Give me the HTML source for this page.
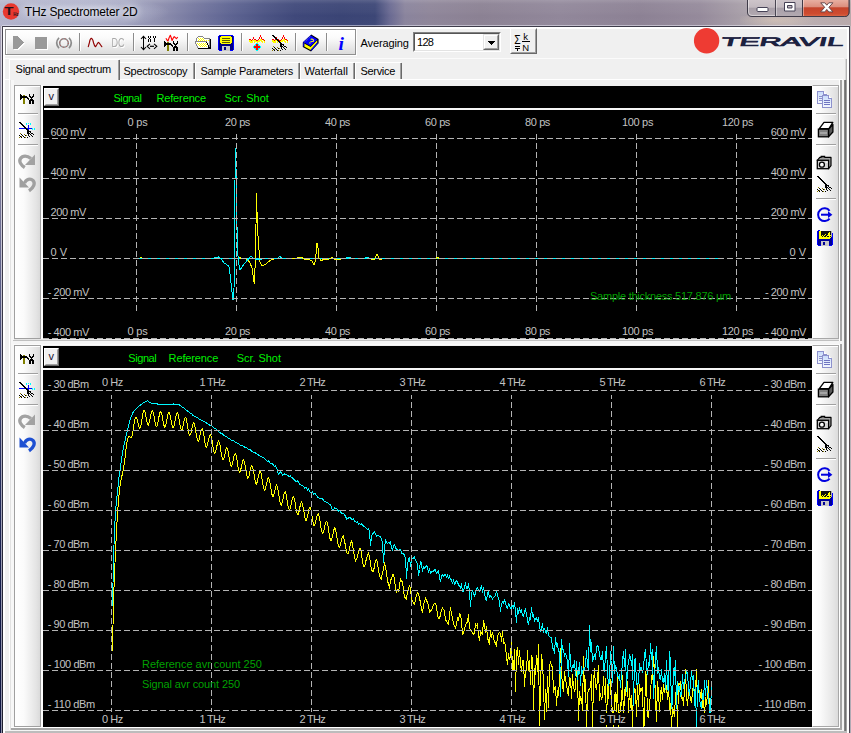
<!DOCTYPE html>
<html><head><meta charset="utf-8"><title>THz Spectrometer 2D</title>
<style>
html,body{margin:0;padding:0;}
body{width:851px;height:733px;overflow:hidden;position:relative;background:#f0f0f0;font-family:"Liberation Sans", sans-serif;font-size:11px;}
.a{position:absolute;}
.t{position:absolute;white-space:nowrap;line-height:13px;height:13px;}
svg{position:absolute;left:0;top:0;overflow:visible;}
</style></head><body>
<div class="a" style="left:0px;top:0px;width:851px;height:26px;background:linear-gradient(180deg,rgba(255,255,255,.16) 0,rgba(255,255,255,.05) 4px,rgba(255,255,255,.03) 45%,rgba(255,255,255,0) 60%,rgba(255,255,255,.02) 100%),radial-gradient(ellipse 90px 16px at 80px 12px,rgba(205,208,228,.75),rgba(205,208,228,0) 100%),linear-gradient(90deg,#b4b4cc 0,#a9abc5 40px,#a0a2be 125px,#8d8eae 160px,#74779f 195px,#5e6492 230px,#4c5484 265px,#3f487a 295px,#3a4475 340px,#3c4676 375px,#6a6a92 390px,#8a849d 405px,#8e8599 430px,#8b8193 480px,#91879a 560px,#8c8194 640px,#958a9b 700px,#a9a0a9 745px,#baafb3 790px,#b8a9ab 851px);"></div>
<div class="a" style="left:740px;top:16px;width:111px;height:10px;background:radial-gradient(ellipse 40px 9px at 35px 4px,rgba(225,205,185,.55),rgba(225,205,185,0) 100%);"></div>
<div class="a" style="left:2px;top:25px;width:848px;height:1px;background:rgba(235,235,245,.55);"></div>
<div class="a" style="left:2px;top:26px;width:848px;height:1px;background:#3e3c4a;"></div>
<div class="a" style="left:0px;top:26px;width:1px;height:707px;background:linear-gradient(180deg,#a9a3b8 0,#8f8da8 100px,#5d6088 250px,#2f3766 400px,#141c4a 560px,#0f1640 707px);"></div>
<div class="a" style="left:1px;top:26px;width:1px;height:707px;background:linear-gradient(180deg,#dcdae4 0,#d6d3de 120px,#b4b4c8 350px,#9496ae 600px,#9092aa 707px);"></div>
<div class="a" style="left:2px;top:26px;width:1px;height:707px;background:linear-gradient(180deg,#45424f 0,#45424f 150px,#2a2a3c 450px,#20202e 707px);"></div>
<div class="a" style="left:849px;top:26px;width:1px;height:707px;background:linear-gradient(180deg,#47434e 0,#574a4c 300px,#4a4450 707px);"></div>
<div class="a" style="left:850px;top:26px;width:1px;height:707px;background:linear-gradient(180deg,#c4b9bc 0,#bfb6ba 300px,#b0aab4 707px);"></div>
<div class="a" style="left:3px;top:27px;width:846px;height:706px;background:#f0f0f0;"></div>
<div class="a" style="left:3px;top:27px;width:846px;height:2px;background:#fff;"></div>
<div class="a" style="left:3px;top:27px;width:2px;height:706px;background:#fff;"></div>
<div class="a" style="left:847px;top:27px;width:2px;height:706px;background:#fff;"></div>
<svg width="24" height="24" viewBox="0 0 24 24" style="left:0;top:0">
<circle cx="11" cy="11.5" r="8.2" fill="#e8382f"/>
<text x="4.600" y="15.200" font-family="Liberation Sans, sans-serif" font-size="10" font-weight="bold" fill="#23141c" textLength="9" lengthAdjust="spacingAndGlyphs">T</text>
<text x="13.2" y="15.8" font-family="Liberation Sans, sans-serif" font-size="4.6" font-weight="bold" fill="#23141c" textLength="5.2" lengthAdjust="spacingAndGlyphs">Hz</text>
</svg>
<div class="t" style="left:24.80px;top:5px;color:#000;font-size:12px;letter-spacing:-0.181px;line-height:15px;height:15px;text-shadow:0 0 6px rgba(255,255,255,.9),0 0 10px rgba(255,255,255,.7);">THz Spectrometer 2D</div>
<svg width="110" height="20" viewBox="0 0 110 20" style="left:741px;top:0">
<defs>
<linearGradient id="cbg" x1="0" y1="0" x2="0" y2="1"><stop offset="0" stop-color="#cfc6cb"/><stop offset=".48" stop-color="#c2b9bf"/><stop offset=".5" stop-color="#a89fa8"/><stop offset="1" stop-color="#b3aab1"/></linearGradient>
<linearGradient id="cbr" x1="0" y1="0" x2="0" y2="1"><stop offset="0" stop-color="#e9b3a6"/><stop offset=".45" stop-color="#dc8f7e"/><stop offset=".5" stop-color="#c4442c"/><stop offset=".85" stop-color="#cf4c30"/><stop offset="1" stop-color="#d9694a"/></linearGradient>
</defs>
<path d="M6.5 -1V12q0 4.5 4.5 4.5H103.5q4.5 0 4.5-4.5V-1z" fill="url(#cbg)" stroke="#3f3b48" stroke-width="1"/>
<path d="M61.5 -1V16.5H103.5q4.5 0 4.5-4.5V-1z" fill="url(#cbr)" stroke="#3f3b48" stroke-width="1"/>
<path d="M7.5 0V12q0 3.5 3.5 3.5H34" fill="none" stroke="rgba(255,255,255,.45)" stroke-width="1"/>
<path d="M35.5 0V16M62.5 0V16" fill="none" stroke="rgba(255,255,255,.4)" stroke-width="1"/>
<path d="M34.5 0V16" stroke="#4a4652" stroke-width="1"/>
<rect x="16" y="7.5" width="11" height="4" rx="1" fill="#fff" stroke="#464256" stroke-width="1"/>
<path d="M43.5 2.5h10.5v8.5h-10.5z M46.5 5.5h4.5v2.5h-4.5z" fill="#fff" fill-rule="evenodd" stroke="#464256" stroke-width="1"/>
<path d="M79.700 2.800h4.100l2 2.400 2-2.400h4.100l-4 4.500 4.100 4.600h-4.200l-2-2.500-2 2.500h-4.200l4.100-4.600z" fill="#fff" stroke="#5a3c40" stroke-width=".9"/>
</svg>
<div class="a" style="left:5px;top:29px;width:351px;height:26px;box-sizing:border-box;border:1px solid #8f8f8f;background:linear-gradient(180deg,#ffffff 0,#fafafa 35%,#e9e9e9 70%,#dcdcdc 100%);"></div>
<div class="a" style="left:6px;top:30px;width:349px;height:1px;background:#fff;"></div>
<div class="a" style="left:6px;top:30px;width:1px;height:24px;background:#fff;"></div>
<div class="a" style="left:5px;top:55px;width:351px;height:1px;background:#fff;"></div>
<div class="a" style="left:356px;top:29px;width:1px;height:27px;background:#fff;"></div>
<div class="a" style="left:79px;top:33px;width:1px;height:18px;background:#8c8c8c;"></div><div class="a" style="left:80px;top:33px;width:1px;height:18px;background:#fff;"></div>
<div class="a" style="left:133px;top:33px;width:1px;height:18px;background:#8c8c8c;"></div><div class="a" style="left:134px;top:33px;width:1px;height:18px;background:#fff;"></div>
<div class="a" style="left:187px;top:33px;width:1px;height:18px;background:#8c8c8c;"></div><div class="a" style="left:188px;top:33px;width:1px;height:18px;background:#fff;"></div>
<div class="a" style="left:241px;top:33px;width:1px;height:18px;background:#8c8c8c;"></div><div class="a" style="left:242px;top:33px;width:1px;height:18px;background:#fff;"></div>
<div class="a" style="left:295px;top:33px;width:1px;height:18px;background:#8c8c8c;"></div><div class="a" style="left:296px;top:33px;width:1px;height:18px;background:#fff;"></div>
<div class="a" style="left:326px;top:33px;width:1px;height:18px;background:#8c8c8c;"></div><div class="a" style="left:327px;top:33px;width:1px;height:18px;background:#fff;"></div>
<svg width="360" height="60" viewBox="0 0 360 60" shape-rendering="crispEdges">
<!-- play -->
<path d="M14 37h4l7 6.5-7 6.5h-4z" fill="#fff"/>
<path d="M13 36h4l6.5 6.5-6.5 6.5h-4z" fill="#999"/>
<!-- stop -->
<rect x="36" y="38" width="12" height="12" fill="#fff"/>
<rect x="35" y="37" width="12" height="12" fill="#999"/>
<!-- (O) -->
<g shape-rendering="auto" fill="none" stroke="#8c8c8c">
<circle cx="64" cy="43" r="4.3" stroke-width="1.6"/>
<path d="M59 37.8q-4.6 5.2 0 10.4M69 37.8q4.600 5.2 0 10.4" stroke-width="1.7"/>
<circle cx="64" cy="43" r="4.3" stroke="#d04040" stroke-width=".7" stroke-dasharray="1 2.4"/>
</g>
<!-- red wave -->
<path d="M88.300 46.700L89.300 43L90 40L90.700 38.700L91.300 38.300L92 38.800L92.800 40L93.600 43L94.600 45.800L95.600 46.700L96.600 45L97.600 43.200L98.500 42.400L99.500 43.400L100.600 45L101.800 46.700" shape-rendering="auto" fill="none" stroke="#900000" stroke-width="1.150" stroke-linejoin="round" stroke-linecap="round"/>
<text x="111.600" y="46.800" shape-rendering="auto" font-family="Liberation Sans, sans-serif" font-size="12" fill="#a8a8a8" textLength="13" lengthAdjust="spacingAndGlyphs" style="filter:drop-shadow(1px 1px 0 #fff)">DC</text>
<!-- XY arrows -->
<g fill="none" stroke="#000" stroke-width="1" shape-rendering="auto">
<path d="M143.500 36.500v13"/>
<path d="M141 39l2.500-2.700 2.500 2.700M141 47l2.500 2.700 2.500-2.700" stroke-width="1.100"/>
<path d="M150 46.300h4" stroke-width="1.200"/>
<path d="M150 43.800l-2.800 2.500 2.800 2.500M154 43.800l2.800 2.500-2.800 2.500" stroke-width="1.100"/>
</g>
<g fill="none" stroke="#000" stroke-width="1">
<path d="M148.500 36v2M150.500 36v2M149.500 38v1M148.500 39v3M150.500 39v3"/>
<path d="M153.500 36v2M155.500 36v2M154.500 38v4"/>
</g>
<!-- hammer + wrench + red wave -->
<path d="M165.900 38.200L167 40L168 41L169 38L170.300 35.200L171 37L172.100 40.500L173 38.500L174.200 36.600L175.200 37.500L176.300 38.700L177.800 37.200" shape-rendering="auto" fill="none" stroke="#ff0000" stroke-width="1.100" stroke-linejoin="round"/>
<rect x="167" y="42" width="2" height="9" fill="#808000"/>
<path d="M164 41h1v1h1v1h5v1h1v1h1v2h-1v-1h-1v-1h-5v1h-1v1h-1z" fill="#000"/>
<path d="M173 41h1v2h1v1h1v-1h1v-2h1v3h-1v1h-1v1h1v1h1v4h-2v-3h-1v3h-2v-4h1v-1h1v-1h-1v-1h-1z" fill="#000"/>
<!-- open folder -->
<defs><pattern id="dth" width="2" height="2" patternUnits="userSpaceOnUse"><rect width="2" height="2" fill="#fff"/><rect x="0" y="0" width="1" height="1" fill="#ffff00"/><rect x="1" y="1" width="1" height="1" fill="#ffff00"/></pattern></defs>
<g>
<path d="M197 37h6v1h1v1h6v3h-13z" fill="#fff"/>
<path d="M198 38h5v1h2v1h4v1h-11z" fill="url(#dth)"/>
<path d="M196 42h11l3 6h-11z" fill="#fff"/>
<path d="M197 43h9l2 4h-9z" fill="url(#dth)"/>
<path d="M198 36.500h5M197 37.500h1M203 37.500h1M204 38.500h6M196.500 38v3M195 41.500h12M195.500 42v2M196.500 44v2M197.500 46v2" fill="none" stroke="#858585" stroke-width="1"/>
<path d="M209 39h1v8h-1z" fill="#858585"/><path d="M210 39h1v10h-1zM198 48h12v1h-12zM206 42h1v1h-1zM207 43h1v2h-1zM208 45h1v3h-1zM209 47h1v1h-1z" fill="#000"/>
</g>
<!-- floppy -->
<g>
<path d="M219 35h14v1h1v14h-1v1h-14v-1h-1v-14h1z" fill="#0000ff"/>
<rect x="219" y="36" width="14" height="14" fill="#000080"/>
<path d="M221 36h10v1h1v6h-1v1h-10v-1h-1v-6h1z" fill="#ffff00"/>
<path d="M222 38.500h8M222 40.500h8M222 42.500h8" stroke="#5a5a00" stroke-width="1"/>
<rect x="222" y="46" width="8" height="5" fill="#c8c8c8"/>
<rect x="224" y="47" width="2" height="3" fill="#000080"/>
</g>
<!-- wave + plus -->
<path d="M249 40h2v2h-2zM250 42h3v1h-3zM251 41h1v1h-1zM252 40h1v2h-1zM253 40h1v1h-1zM254 40h2v2h-2zM254 42h1v1h-1zM256 41h2v1h-2zM257 42h1v1h-1zM258 40h2v2h-2zM260 39h2v2h-2zM261 41h1v1h-1zM262 41h1v2h-1zM263 40h1v1h-1zM264 41h1v2h-1z" fill="#ffff00"/><path d="M249 39h2v1h-2zM251 40h1v1h-1zM252 39h1v1h-1zM253 37h1v2h-1zM254 39h2v1h-2zM256 40h2v1h-2zM258 39h1v1h-1zM259 37h1v2h-1zM260 35h1v2h-1zM261 37h1v2h-1zM262 39h2v1h-2zM264 40h1v1h-1z" fill="#ff0000"/>
<path d="M256 43h2v1h-2zM255 44h4v1h-4zM254 45h6v1h-6zM253 46h8v2h-8zM254 48h6v1h-6zM255 49h4v1h-4zM256 50h2v1h-2z" fill="#00ffff"/><path d="M256 44h2v6h-2zM254 46h6v2h-6z" fill="#ff0000"/>
<!-- wave + rake -->
<path d="M272 40h2v2h-2zM273 42h3v1h-3zM274 41h1v1h-1zM275 40h1v2h-1zM276 40h1v1h-1zM277 40h2v2h-2zM277 42h1v1h-1zM279 41h2v1h-2zM280 42h1v1h-1zM281 40h2v2h-2zM283 39h2v2h-2zM284 41h1v1h-1zM285 41h1v2h-1zM286 40h1v1h-1zM287 41h1v2h-1z" fill="#ffff00"/><path d="M272 39h2v1h-2zM274 40h1v1h-1zM275 39h1v1h-1zM276 37h1v2h-1zM277 39h2v1h-2zM279 40h2v1h-2zM281 39h1v1h-1zM282 37h1v2h-1zM283 35h1v2h-1zM284 37h1v2h-1zM285 39h2v1h-2zM287 40h1v1h-1z" fill="#ff0000"/>
<path d="M272 35h2v1h-2zM273 36h2v1h-2zM274 37h2v1h-2zM275 38h2v1h-2zM276 39h2v1h-2zM277 40h2v1h-2zM278 41h2v1h-2zM279 42h2v1h-2zM280 43h2v1h-2zM281 44h2v1h-2zM280 44h3v1h-3zM280 45h2v2h-2zM281 47h1v2h-1zM282 46h1v1h-1zM282 49h1v1h-1zM283 45h1v1h-1zM283 47h1v1h-1zM284 46h1v1h-1zM284 48h1v1h-1zM285 46h1v1h-1zM285 49h1v1h-1zM286 47h1v1h-1zM283 44h1v1h-1z" fill="#000"/><path d="M272 48h1v1h-1zM273 49h1v1h-1zM274 50h1v1h-1zM274 47h1v1h-1zM275 48h1v1h-1zM276 49h1v1h-1zM277 50h1v1h-1zM278 48h1v1h-1zM280 50h1v1h-1z" fill="#000"/><path d="M273 46h1v1h-1zM277 47h1v1h-1zM279 48h1v1h-1zM274 49h1v1h-1zM272 50h1v1h-1zM278 50h1v1h-1z" fill="#908000"/>
<!-- help book -->
<g shape-rendering="auto">
<path d="M310.600 35.200L311.200 34.400L318.600 39V43.300L311 51.400L302.800 47V42.400L303.200 42.100Z" fill="#000"/>
<path d="M304.200 43.400L310.600 47L317.200 40.300V42.600L310.600 50L304.200 46.500Z" fill="#ffff00"/>
<path d="M310.900 50.400L317.900 42.700" stroke="#0000ff" stroke-width="1.100"/>
<path d="M303.200 42.200V46.300L304.300 46.800V42.800Z" fill="#0000ff"/>
<path d="M310.600 35.200L317.400 39.400L310.600 46.200L303.200 42.100Z" fill="#0000ff"/>
<path d="M304.600 42L310.600 36.200" stroke="#a0a070" stroke-width=".9" stroke-dasharray="1 1"/>
<text x="0" y="0" font-family="Liberation Sans, sans-serif" font-weight="bold" font-size="8" fill="#ffff00" transform="translate(307.600,42.100) rotate(38)">?</text>
</g>
<!-- info i -->
<text x="338.600" y="49.600" shape-rendering="auto" font-family="Liberation Serif, serif" font-style="italic" font-weight="bold" font-size="19.500" fill="#0000ff">i</text>
</svg>
<div class="t" style="left:360.60px;top:37px;color:#000;font-size:11px;letter-spacing:-0.127px;">Averaging</div>
<div class="a" style="left:413px;top:32px;width:88px;height:20px;box-sizing:border-box;background:#fff;border:1px solid;border-color:#828282 #fff #fff #828282;"></div>
<div class="a" style="left:414px;top:33px;width:86px;height:18px;box-sizing:border-box;border:1px solid;border-color:#555 #e3e3e3 #e3e3e3 #555;"></div>
<div class="t" style="left:417.00px;top:36px;color:#000;font-size:11px;letter-spacing:-0.720px;">128</div>
<div class="a" style="left:483px;top:34px;width:16px;height:16px;box-sizing:border-box;background:#f0f0f0;border:1px solid;border-color:#e3e3e3 #696969 #696969 #e3e3e3;"></div>
<div class="a" style="left:484px;top:35px;width:14px;height:14px;box-sizing:border-box;border:1px solid;border-color:#fff #a0a0a0 #a0a0a0 #fff;"></div>
<svg width="20" height="20" viewBox="0 0 20 20" style="left:483px;top:34px" shape-rendering="crispEdges"><path d="M5 7h7v1h-1v1h-1v1h-1v1h-1v-1h-1v-1h-1v-1h-1z" fill="#000"/></svg>
<div class="a" style="left:510px;top:28px;width:27px;height:26px;box-sizing:border-box;background:#f0f0f0;border:1px solid;border-color:#fff #696969 #696969 #fff;"></div>
<div class="a" style="left:511px;top:29px;width:25px;height:24px;box-sizing:border-box;border:1px solid;border-color:#f0f0f0 #a0a0a0 #a0a0a0 #f0f0f0;"></div>
<svg width="30" height="30" viewBox="0 0 30 30" style="left:510px;top:28px">
<text x="4.300" y="16" font-family="Liberation Sans, sans-serif" font-size="13" fill="#000" textLength="6.400" lengthAdjust="spacingAndGlyphs">Σ</text>
<g shape-rendering="crispEdges" fill="none" stroke="#000" stroke-width="1">
<path d="M5 18.500h5M5 20.500h5M7.500 21v2"/>
<path d="M12 13.500h8"/>
</g>
<text x="13.200" y="12" font-family="Liberation Sans, sans-serif" font-size="9.500" fill="#000">k</text>
<text x="12.300" y="22.500" font-family="Liberation Sans, sans-serif" font-size="9.500" fill="#000">N</text>
</svg>
<svg width="160" height="30" viewBox="0 0 160 30" style="left:690px;top:27px">
<circle cx="16.600" cy="13.800" r="12.700" fill="#ee3b33"/>
<g transform="translate(30.500,18.700) skewX(-14)"><text x="0" y="0" font-family="Liberation Sans, sans-serif" font-size="12.400" fill="#1b2140" stroke="#1b2140" stroke-width=".75" textLength="122.500" lengthAdjust="spacingAndGlyphs">TERAVIL</text></g>
</svg>
<div class="a" style="left:5px;top:58px;width:839px;height:1px;background:#fbfbfb;"></div>
<div class="a" style="left:5px;top:79px;width:838px;height:1px;background:#fff;"></div>
<div class="a" style="left:9px;top:59px;width:1px;height:674px;background:#fff;"></div>
<div class="a" style="left:10px;top:80px;width:1px;height:650px;background:#e2e2e2;"></div>
<div class="a" style="left:11px;top:80px;width:3px;height:653px;background:#f7f7f7;"></div>
<div class="a" style="left:119px;top:62px;width:76px;height:17px;background:#f0f0f0;"></div><div class="a" style="left:119px;top:62px;width:75px;height:1px;background:#fff;"></div><div class="a" style="left:119px;top:62px;width:1px;height:17px;background:#fff;"></div><div class="a" style="left:193px;top:63px;width:1px;height:16px;background:#a0a0a0;"></div><div class="a" style="left:194px;top:63px;width:1px;height:16px;background:#696969;"></div><div class="t" style="left:123.50px;top:65px;color:#000;font-size:11px;letter-spacing:-0.238px;">Spectroscopy</div>
<div class="a" style="left:195px;top:62px;width:105px;height:17px;background:#f0f0f0;"></div><div class="a" style="left:195px;top:62px;width:104px;height:1px;background:#fff;"></div><div class="a" style="left:195px;top:62px;width:1px;height:17px;background:#fff;"></div><div class="a" style="left:298px;top:63px;width:1px;height:16px;background:#a0a0a0;"></div><div class="a" style="left:299px;top:63px;width:1px;height:16px;background:#696969;"></div><div class="t" style="left:200.50px;top:65px;color:#000;font-size:11px;letter-spacing:-0.278px;">Sample Parameters</div>
<div class="a" style="left:300px;top:62px;width:55px;height:17px;background:#f0f0f0;"></div><div class="a" style="left:300px;top:62px;width:54px;height:1px;background:#fff;"></div><div class="a" style="left:300px;top:62px;width:1px;height:17px;background:#fff;"></div><div class="a" style="left:353px;top:63px;width:1px;height:16px;background:#a0a0a0;"></div><div class="a" style="left:354px;top:63px;width:1px;height:16px;background:#696969;"></div><div class="t" style="left:304.50px;top:65px;color:#000;font-size:11px;letter-spacing:0.056px;">Waterfall</div>
<div class="a" style="left:355px;top:62px;width:47px;height:17px;background:#f0f0f0;"></div><div class="a" style="left:355px;top:62px;width:46px;height:1px;background:#fff;"></div><div class="a" style="left:355px;top:62px;width:1px;height:17px;background:#fff;"></div><div class="a" style="left:400px;top:63px;width:1px;height:16px;background:#a0a0a0;"></div><div class="a" style="left:401px;top:63px;width:1px;height:16px;background:#696969;"></div><div class="t" style="left:360.50px;top:65px;color:#000;font-size:11px;letter-spacing:-0.312px;">Service</div>
<div class="a" style="left:9px;top:59px;width:111px;height:21px;background:#f0f0f0;"></div><div class="a" style="left:9px;top:59px;width:110px;height:1px;background:#fff;"></div><div class="a" style="left:9px;top:59px;width:1px;height:21px;background:#fff;"></div><div class="a" style="left:118px;top:60px;width:1px;height:20px;background:#a0a0a0;"></div><div class="a" style="left:119px;top:60px;width:1px;height:20px;background:#696969;"></div><div class="t" style="left:15.60px;top:63px;color:#000;font-size:11px;letter-spacing:-0.257px;">Signal and spectrum</div>
<div class="a" style="left:14px;top:339px;width:826px;height:1px;background:#e6e6e6;"></div>
<div class="a" style="left:13px;top:340px;width:828px;height:1px;background:#c0c0c0;"></div>
<div class="a" style="left:14px;top:85px;width:27px;height:254px;box-sizing:border-box;border:1px solid;border-color:#a0a0a0 #a0a0a0 #a0a0a0 #a0a0a0;background:linear-gradient(90deg,#ffffff 0,#fbfbfb 35%,#e4e4e4 85%,#dadada 100%);"></div><div class="a" style="left:15px;top:86px;width:25px;height:1px;background:#fff;"></div><div class="a" style="left:41px;top:85px;width:2px;height:254px;background:#fff;"></div><div class="a" style="left:18px;top:113px;width:20px;height:1px;background:#a0a0a0;"></div><div class="a" style="left:18px;top:114px;width:20px;height:1px;background:#fff;"></div><div class="a" style="left:18px;top:144px;width:20px;height:1px;background:#a0a0a0;"></div><div class="a" style="left:18px;top:145px;width:20px;height:1px;background:#fff;"></div><svg width="30" height="120" viewBox="0 0 30 120" style="left:14px;top:85px">
<g shape-rendering="crispEdges">
<!-- hammer+wrench -->
<rect x="9" y="10" width="2" height="9" fill="#808000"/>
<path d="M6 9h1v1h1v1h5v1h1v1h1v2h-1v-1h-1v-1h-5v1h-1v1h-1z" fill="#000"/>
<path d="M15 9h1v2h1v1h1v-1h1v-2h1v3h-1v1h-1v1h1v1h1v4h-2v-3h-1v3h-2v-4h1v-1h1v-1h-1v-1h-1z" fill="#000"/>
<!-- cursor icon -->
<path d="M5 43.500h13" stroke="#0000ff" stroke-width="1"/>
<path d="M14.500 40v7" stroke="#0000ff" stroke-width="1"/>
<path d="M12 38h1v2h-1zM14 38h1v1h-1zM16 38h1v2h-1zM18 43h1v2h-1zM20 43h1v2h-1z" fill="#00ffff"/>
<path d="M5 37h2v1h-2zM6 38h2v1h-2zM7 39h2v1h-2zM8 40h2v1h-2zM9 41h2v1h-2zM10 42h2v1h-2zM11 43h2v1h-2zM12 44h2v1h-2zM13 45h2v1h-2zM14 46h2v1h-2zM13 46h3v1h-3zM13 47h2v2h-2zM14 49h1v2h-1zM15 48h1v1h-1zM15 51h1v1h-1zM16 47h1v1h-1zM16 49h1v1h-1zM17 48h1v1h-1zM17 50h1v1h-1zM18 48h1v1h-1zM18 51h1v1h-1zM19 49h1v1h-1zM16 46h1v1h-1z" fill="#000"/><path d="M5 50h1v1h-1zM6 51h1v1h-1zM7 52h1v1h-1zM7 49h1v1h-1zM8 50h1v1h-1zM9 51h1v1h-1zM10 52h1v1h-1zM11 50h1v1h-1zM13 52h1v1h-1z" fill="#000"/><path d="M6 48h1v1h-1zM10 49h1v1h-1zM12 50h1v1h-1zM7 51h1v1h-1zM5 52h1v1h-1zM11 52h1v1h-1z" fill="#908000"/>
</g>
<!-- redo (grey) -->
<path d="M10.800 82.500C7 80 4.500 76.500 6.500 73.500C8.500 70.500 13 70.300 17 73.500" fill="none" stroke="#a2a2a2" stroke-width="3.300"/>
<path d="M21 69.500v10.500h-10z" fill="#a2a2a2"/>
<!-- undo -->
<path d="M10.500 98.300C12 94 16.500 93.200 19 95.500C21.500 98 20 102.500 15 105.800" fill="none" stroke="#a0a0a0" stroke-width="3.300"/>
<path d="M5.500 92.500v10h9.500z" fill="#a0a0a0"/>
</svg>
<div class="a" style="left:812px;top:85px;width:27px;height:254px;box-sizing:border-box;border:1px solid;border-color:#a8a8a8 #a8a8a8 #a8a8a8 #fff;background:linear-gradient(90deg,#ffffff 0,#fafafa 30%,#e6e6e6 80%,#dcdcdc 100%);"></div><div class="a" style="left:813px;top:86px;width:25px;height:1px;background:#fff;"></div><div class="a" style="left:816px;top:113px;width:20px;height:1px;background:#a0a0a0;"></div><div class="a" style="left:816px;top:114px;width:20px;height:1px;background:#fff;"></div><div class="a" style="left:816px;top:144px;width:20px;height:1px;background:#a0a0a0;"></div><div class="a" style="left:816px;top:145px;width:20px;height:1px;background:#fff;"></div><div class="a" style="left:816px;top:198px;width:20px;height:1px;background:#a0a0a0;"></div><div class="a" style="left:816px;top:199px;width:20px;height:1px;background:#fff;"></div><svg width="30" height="170" viewBox="0 0 30 170" style="left:812px;top:85px">
<defs><linearGradient id="dg85" x1="0" y1="0" x2="0" y2="1"><stop offset="0" stop-color="#c9dcfb"/><stop offset="1" stop-color="#f4f7fe"/></linearGradient></defs>
<!-- copy -->
<g shape-rendering="crispEdges">
<path d="M5.500 6.500h6l3 3v8.500h-9z" fill="url(#dg85)" stroke="#8d91cd" stroke-width="1"/>
<path d="M11.500 6.500v3h3" fill="#fff" stroke="#8d91cd" stroke-width="1"/>
<path d="M7 11.500h3M7 13.500h3M7 15.500h3" stroke="#8d91cd"/>
<path d="M10.500 10.500h6l3 3v8.500h-9z" fill="url(#dg85)" stroke="#8d91cd" stroke-width="1"/>
<path d="M16.500 10.500v3h3" fill="#fff" stroke="#8d91cd" stroke-width="1"/>
<path d="M12 15.500h6M12 17.500h6M12 19.500h6" stroke="#7075c1"/>
</g>
<!-- printer -->
<path d="M12 37.300H20.800L17 43.600H7.300Z" fill="#fff" stroke="#000" stroke-width="1.300" stroke-linejoin="round"/>
<path d="M16.500 44.200L20.900 39.500V47L16.500 51.800Z" fill="#5a5a5a" stroke="#000" stroke-width="1.300" stroke-linejoin="round"/>
<rect x="6.400" y="44.200" width="10.100" height="7.600" fill="#808080" stroke="#000" stroke-width="1.300"/>
<path d="M8 48h7" stroke="#b4b4b4" stroke-width="1.400"/>
<!-- camera -->
<path d="M5.300 75.300L7.800 72.400H19V80.700L16.500 83.700Z" fill="#a0a0a0" stroke="#000" stroke-width="1.200" stroke-linejoin="round"/>
<rect x="5.300" y="75.300" width="11.300" height="8.400" fill="#d4d4d4" stroke="#000" stroke-width="1.300"/>
<path d="M9.200 72.400V71.400H12.600V72.400" fill="#fff" stroke="#000" stroke-width="1.200"/>
<circle cx="9.900" cy="79.700" r="2.500" fill="#fff" stroke="#000" stroke-width="1.300"/>
<rect x="13.600" y="76.700" width="2" height="1" fill="#fff"/>
<!-- rake -->
<g shape-rendering="crispEdges"><path d="M5 91h2v1h-2zM6 92h2v1h-2zM7 93h2v1h-2zM8 94h2v1h-2zM9 95h2v1h-2zM10 96h2v1h-2zM11 97h2v1h-2zM12 98h2v1h-2zM13 99h2v1h-2zM14 100h2v1h-2zM13 100h3v1h-3zM13 101h2v2h-2zM14 103h1v2h-1zM15 102h1v1h-1zM15 105h1v1h-1zM16 101h1v1h-1zM16 103h1v1h-1zM17 102h1v1h-1zM17 104h1v1h-1zM18 102h1v1h-1zM18 105h1v1h-1zM19 103h1v1h-1zM16 100h1v1h-1z" fill="#000"/><path d="M5 104h1v1h-1zM6 105h1v1h-1zM7 106h1v1h-1zM7 103h1v1h-1zM8 104h1v1h-1zM9 105h1v1h-1zM10 106h1v1h-1zM11 104h1v1h-1zM13 106h1v1h-1z" fill="#000"/><path d="M6 102h1v1h-1zM10 103h1v1h-1zM12 104h1v1h-1zM7 105h1v1h-1zM5 106h1v1h-1zM11 106h1v1h-1z" fill="#908000"/></g>
<!-- circular arrow -->
<path d="M17.600 125.800a6.400 6.400 0 1 0 0 7.800" fill="none" stroke="#0000e0" stroke-width="2"/>
<path d="M9 129.700h9" stroke="#0000e0" stroke-width="2"/>
<path d="M16 126.300l4.400 3.400-4.400 3.400z" fill="#0000e0"/>
<!-- floppy w/ wave -->
<g shape-rendering="crispEdges">
<path d="M6 145h2v1h12v2h1v12h-1v1h-14v-1h-1v-14h1z" fill="#0000ff"/>
<path d="M6 146h14v14h-14z" fill="#000098"/>
<rect x="8" y="146" width="11" height="6" fill="#101010"/>
<rect x="19" y="146" width="1" height="6" fill="#b0b0b0"/>
<path d="M7 146h2v8h-2zM9 151h1v1h-1zM10 150h1v1h-1zM11 151h1v1h-1zM12 150h1v1h-1zM13 149h1v1h-1zM14 151h1v1h-1zM15 150h1v1h-1zM16 148h1v3h-1zM17 147h1v5h-1zM18 150h1v1h-1z" fill="#ffff00"/>
<path d="M7 152.500h12M7 153.500h11" stroke="#ffff00"/>
<rect x="9" y="156" width="8" height="5" fill="#c8c8c8"/>
<rect x="11" y="157" width="2" height="3" fill="#000098"/>
</g>
</svg>
<div class="a" style="left:43px;top:86px;width:769px;height:22px;background:#000;"></div>
<div class="a" style="left:43px;top:108px;width:769px;height:2px;background:#f6f6f6;"></div>
<div class="a" style="left:43px;top:110px;width:769px;height:229px;background:#000;"></div>
<div class="a" style="left:43px;top:86px;width:1px;height:253px;background:#000;"></div>
<div class="a" style="left:44px;top:88px;width:15px;height:18px;box-sizing:border-box;background:#f0f0f0;border:1px solid;border-color:#fff #696969 #696969 #fff;"></div><div class="a" style="left:45px;top:89px;width:13px;height:16px;box-sizing:border-box;border:1px solid;border-color:#f0f0f0 #a0a0a0 #a0a0a0 #f0f0f0;"></div><div class="t" style="left:48.50px;top:90px;color:#1a1030;font-size:11px;letter-spacing:0.000px;">v</div>
<div class="t" style="left:113.40px;top:92px;color:#00f000;font-size:11px;letter-spacing:-0.396px;">Signal</div><div class="t" style="left:156.40px;top:92px;color:#00f000;font-size:11px;letter-spacing:-0.130px;">Reference</div><div class="t" style="left:224.60px;top:92px;color:#00f000;font-size:11px;letter-spacing:-0.060px;">Scr. Shot</div>
<svg width="851" height="733" viewBox="0 0 851 733" shape-rendering="crispEdges">
<path d="M137 258.500H720" stroke="#00f8ff" stroke-width="1"/>
<path d="M237.0 258.5 L239.0 257.5 L242.0 258.5 L246.0 258.5 L248.0 260.0 L250.0 263.0 L252.0 268.0 L253.5 278.0 L254.3 283.5 L255.3 262.0 L256.0 225.0 L256.4 193.0 L256.6 193.0 L257.3 225.0 L258.5 244.0 L260.0 262.0 L262.0 266.0 L266.0 264.0 L270.0 260.5 L275.0 258.5 L282.0 258.0 L286.0 258.5 L296.0 258.5 L298.0 257.5 L302.0 257.5 L304.0 259.0 L309.0 259.5 L312.0 261.0 L314.0 264.5 L315.0 262.0 L316.0 254.0 L317.0 243.5 L318.0 248.0 L319.0 258.0 L321.0 260.5 L324.0 259.5 L329.0 259.0 L332.0 257.5 L334.0 259.0 L338.0 260.0 L341.0 259.0" fill="none" stroke="#ffff00" stroke-width="1" stroke-linejoin="round"/>
<path d="M209.0 258.5 L214.0 258.0 L218.5 257.0 L221.0 258.5 L224.0 263.0 L226.0 264.0 L229.0 266.5 L230.5 278.0 L232.0 292.0 L233.0 300.0 L234.0 290.0 L234.5 225.0 L235.0 180.0 L235.5 149.0 L236.0 168.0 L236.5 200.0 L237.0 226.0 L237.5 250.0 L238.5 262.0 L240.0 270.0 L241.5 268.0 L244.0 264.0 L248.0 259.5 L251.0 256.0 L253.0 258.0 L256.0 259.5 L262.0 259.0 L268.0 258.5 L277.0 258.5 L280.0 256.5 L282.0 258.0 L286.0 259.0" fill="none" stroke="#00f8ff" stroke-width="1" stroke-linejoin="round"/>
<path d="M371.0 259.0 L374.0 259.5 L376.0 256.0 L377.0 254.0 L378.5 257.0 L380.0 260.0 L382.0 259.0" fill="none" stroke="#ffff00" stroke-width="1" stroke-linejoin="round"/>
<path d="M436.0 258.5 L437.0 257.0 L438.5 257.5 L439.0 258.5" fill="none" stroke="#ffff00" stroke-width="1" stroke-linejoin="round"/>
<path d="M346.0 257.5 L351.0 257.5" fill="none" stroke="#00f8ff" stroke-width="1" stroke-linejoin="round"/>
<path d="M365.0 257.5 L369.0 257.5" fill="none" stroke="#00f8ff" stroke-width="1" stroke-linejoin="round"/>
<path d="M140.0 257.5 L142.0 257.5" fill="none" stroke="#ffff00" stroke-width="1" stroke-linejoin="round"/>
<path d="M136.5 134V314" stroke="#b4b4b4" stroke-dasharray="6 3" stroke-width="1"/>
<path d="M236.5 134V314" stroke="#b4b4b4" stroke-dasharray="6 3" stroke-width="1"/>
<path d="M336.5 134V314" stroke="#b4b4b4" stroke-dasharray="6 3" stroke-width="1"/>
<path d="M436.5 134V314" stroke="#b4b4b4" stroke-dasharray="6 3" stroke-width="1"/>
<path d="M536.5 134V314" stroke="#b4b4b4" stroke-dasharray="6 3" stroke-width="1"/>
<path d="M636.5 134V314" stroke="#b4b4b4" stroke-dasharray="6 3" stroke-width="1"/>
<path d="M736.5 134V314" stroke="#b4b4b4" stroke-dasharray="6 3" stroke-width="1"/>
<path d="M43 138.5H812" stroke="#b4b4b4" stroke-dasharray="6 3" stroke-width="1"/>
<path d="M43 178.5H812" stroke="#b4b4b4" stroke-dasharray="6 3" stroke-width="1"/>
<path d="M43 218.5H812" stroke="#b4b4b4" stroke-dasharray="6 3" stroke-width="1"/>
<path d="M43 258.5H812" stroke="#b4b4b4" stroke-dasharray="6 3" stroke-width="1"/>
<path d="M43 298.5H812" stroke="#b4b4b4" stroke-dasharray="6 3" stroke-width="1"/>
<path d="M43 338.5H812" stroke="#b4b4b4" stroke-dasharray="6 3" stroke-width="1"/>
</svg>
<div class="t" style="left:50.60px;top:126px;color:#c2c2c2;font-size:11px;letter-spacing:-0.454px;">600 mV</div>
<div class="t" style="left:770.80px;top:126px;color:#c2c2c2;font-size:11px;letter-spacing:-0.454px;">600 mV</div>
<div class="t" style="left:50.60px;top:166px;color:#c2c2c2;font-size:11px;letter-spacing:-0.454px;">400 mV</div>
<div class="t" style="left:770.80px;top:166px;color:#c2c2c2;font-size:11px;letter-spacing:-0.454px;">400 mV</div>
<div class="t" style="left:50.60px;top:206px;color:#c2c2c2;font-size:11px;letter-spacing:-0.454px;">200 mV</div>
<div class="t" style="left:770.80px;top:206px;color:#c2c2c2;font-size:11px;letter-spacing:-0.454px;">200 mV</div>
<div class="t" style="left:50.60px;top:246px;color:#c2c2c2;font-size:11px;letter-spacing:-0.005px;">0 V</div>
<div class="t" style="left:789.50px;top:246px;color:#c2c2c2;font-size:11px;letter-spacing:-0.005px;">0 V</div>
<div class="t" style="left:47.80px;top:286px;color:#c2c2c2;font-size:11px;letter-spacing:-0.455px;">- 200 mV</div>
<div class="t" style="left:765.00px;top:286px;color:#c2c2c2;font-size:11px;letter-spacing:-0.455px;">- 200 mV</div>
<div class="t" style="left:47.80px;top:326px;color:#c2c2c2;font-size:11px;letter-spacing:-0.455px;">- 400 mV</div>
<div class="t" style="left:765.00px;top:326px;color:#c2c2c2;font-size:11px;letter-spacing:-0.455px;">- 400 mV</div>
<div class="t" style="left:127.45px;top:116px;color:#c2c2c2;font-size:11px;letter-spacing:-0.174px;">0 ps</div>
<div class="t" style="left:127.45px;top:325px;color:#c2c2c2;font-size:11px;letter-spacing:-0.174px;">0 ps</div>
<div class="t" style="left:225.00px;top:116px;color:#c2c2c2;font-size:11px;letter-spacing:-0.384px;">20 ps</div>
<div class="t" style="left:225.00px;top:325px;color:#c2c2c2;font-size:11px;letter-spacing:-0.384px;">20 ps</div>
<div class="t" style="left:325.00px;top:116px;color:#c2c2c2;font-size:11px;letter-spacing:-0.384px;">40 ps</div>
<div class="t" style="left:325.00px;top:325px;color:#c2c2c2;font-size:11px;letter-spacing:-0.384px;">40 ps</div>
<div class="t" style="left:425.00px;top:116px;color:#c2c2c2;font-size:11px;letter-spacing:-0.384px;">60 ps</div>
<div class="t" style="left:425.00px;top:325px;color:#c2c2c2;font-size:11px;letter-spacing:-0.384px;">60 ps</div>
<div class="t" style="left:525.00px;top:116px;color:#c2c2c2;font-size:11px;letter-spacing:-0.384px;">80 ps</div>
<div class="t" style="left:525.00px;top:325px;color:#c2c2c2;font-size:11px;letter-spacing:-0.384px;">80 ps</div>
<div class="t" style="left:621.90px;top:116px;color:#c2c2c2;font-size:11px;letter-spacing:-0.305px;">100 ps</div>
<div class="t" style="left:621.90px;top:325px;color:#c2c2c2;font-size:11px;letter-spacing:-0.305px;">100 ps</div>
<div class="t" style="left:721.90px;top:116px;color:#c2c2c2;font-size:11px;letter-spacing:-0.305px;">120 ps</div>
<div class="t" style="left:721.90px;top:325px;color:#c2c2c2;font-size:11px;letter-spacing:-0.305px;">120 ps</div>
<div class="t" style="left:590.00px;top:290px;color:#00a000;font-size:11px;letter-spacing:-0.244px;">Sample thickness 517.876 µm</div>
<div class="a" style="left:14px;top:345px;width:27px;height:382px;box-sizing:border-box;border:1px solid;border-color:#a0a0a0 #a0a0a0 #a0a0a0 #a0a0a0;background:linear-gradient(90deg,#ffffff 0,#fbfbfb 35%,#e4e4e4 85%,#dadada 100%);"></div><div class="a" style="left:15px;top:346px;width:25px;height:1px;background:#fff;"></div><div class="a" style="left:41px;top:345px;width:2px;height:382px;background:#fff;"></div><div class="a" style="left:18px;top:373px;width:20px;height:1px;background:#a0a0a0;"></div><div class="a" style="left:18px;top:374px;width:20px;height:1px;background:#fff;"></div><div class="a" style="left:18px;top:404px;width:20px;height:1px;background:#a0a0a0;"></div><div class="a" style="left:18px;top:405px;width:20px;height:1px;background:#fff;"></div><svg width="30" height="120" viewBox="0 0 30 120" style="left:14px;top:345px">
<g shape-rendering="crispEdges">
<!-- hammer+wrench -->
<rect x="9" y="10" width="2" height="9" fill="#808000"/>
<path d="M6 9h1v1h1v1h5v1h1v1h1v2h-1v-1h-1v-1h-5v1h-1v1h-1z" fill="#000"/>
<path d="M15 9h1v2h1v1h1v-1h1v-2h1v3h-1v1h-1v1h1v1h1v4h-2v-3h-1v3h-2v-4h1v-1h1v-1h-1v-1h-1z" fill="#000"/>
<!-- cursor icon -->
<path d="M5 43.500h13" stroke="#0000ff" stroke-width="1"/>
<path d="M14.500 40v7" stroke="#0000ff" stroke-width="1"/>
<path d="M12 38h1v2h-1zM14 38h1v1h-1zM16 38h1v2h-1zM18 43h1v2h-1zM20 43h1v2h-1z" fill="#00ffff"/>
<path d="M5 37h2v1h-2zM6 38h2v1h-2zM7 39h2v1h-2zM8 40h2v1h-2zM9 41h2v1h-2zM10 42h2v1h-2zM11 43h2v1h-2zM12 44h2v1h-2zM13 45h2v1h-2zM14 46h2v1h-2zM13 46h3v1h-3zM13 47h2v2h-2zM14 49h1v2h-1zM15 48h1v1h-1zM15 51h1v1h-1zM16 47h1v1h-1zM16 49h1v1h-1zM17 48h1v1h-1zM17 50h1v1h-1zM18 48h1v1h-1zM18 51h1v1h-1zM19 49h1v1h-1zM16 46h1v1h-1z" fill="#000"/><path d="M5 50h1v1h-1zM6 51h1v1h-1zM7 52h1v1h-1zM7 49h1v1h-1zM8 50h1v1h-1zM9 51h1v1h-1zM10 52h1v1h-1zM11 50h1v1h-1zM13 52h1v1h-1z" fill="#000"/><path d="M6 48h1v1h-1zM10 49h1v1h-1zM12 50h1v1h-1zM7 51h1v1h-1zM5 52h1v1h-1zM11 52h1v1h-1z" fill="#908000"/>
</g>
<!-- redo (grey) -->
<path d="M10.800 82.500C7 80 4.500 76.500 6.500 73.500C8.500 70.500 13 70.300 17 73.500" fill="none" stroke="#a2a2a2" stroke-width="3.300"/>
<path d="M21 69.500v10.500h-10z" fill="#a2a2a2"/>
<!-- undo -->
<path d="M10.500 98.300C12 94 16.500 93.200 19 95.500C21.500 98 20 102.500 15 105.800" fill="none" stroke="#1e50d2" stroke-width="3.300"/>
<path d="M5.500 92.500v10h9.500z" fill="#1e50d2"/>
</svg>
<div class="a" style="left:812px;top:345px;width:27px;height:382px;box-sizing:border-box;border:1px solid;border-color:#a8a8a8 #a8a8a8 #a8a8a8 #fff;background:linear-gradient(90deg,#ffffff 0,#fafafa 30%,#e6e6e6 80%,#dcdcdc 100%);"></div><div class="a" style="left:813px;top:346px;width:25px;height:1px;background:#fff;"></div><div class="a" style="left:816px;top:373px;width:20px;height:1px;background:#a0a0a0;"></div><div class="a" style="left:816px;top:374px;width:20px;height:1px;background:#fff;"></div><div class="a" style="left:816px;top:404px;width:20px;height:1px;background:#a0a0a0;"></div><div class="a" style="left:816px;top:405px;width:20px;height:1px;background:#fff;"></div><div class="a" style="left:816px;top:458px;width:20px;height:1px;background:#a0a0a0;"></div><div class="a" style="left:816px;top:459px;width:20px;height:1px;background:#fff;"></div><svg width="30" height="170" viewBox="0 0 30 170" style="left:812px;top:345px">
<defs><linearGradient id="dg345" x1="0" y1="0" x2="0" y2="1"><stop offset="0" stop-color="#c9dcfb"/><stop offset="1" stop-color="#f4f7fe"/></linearGradient></defs>
<!-- copy -->
<g shape-rendering="crispEdges">
<path d="M5.500 6.500h6l3 3v8.500h-9z" fill="url(#dg345)" stroke="#8d91cd" stroke-width="1"/>
<path d="M11.500 6.500v3h3" fill="#fff" stroke="#8d91cd" stroke-width="1"/>
<path d="M7 11.500h3M7 13.500h3M7 15.500h3" stroke="#8d91cd"/>
<path d="M10.500 10.500h6l3 3v8.500h-9z" fill="url(#dg345)" stroke="#8d91cd" stroke-width="1"/>
<path d="M16.500 10.500v3h3" fill="#fff" stroke="#8d91cd" stroke-width="1"/>
<path d="M12 15.500h6M12 17.500h6M12 19.500h6" stroke="#7075c1"/>
</g>
<!-- printer -->
<path d="M12 37.300H20.800L17 43.600H7.300Z" fill="#fff" stroke="#000" stroke-width="1.300" stroke-linejoin="round"/>
<path d="M16.500 44.200L20.900 39.500V47L16.500 51.800Z" fill="#5a5a5a" stroke="#000" stroke-width="1.300" stroke-linejoin="round"/>
<rect x="6.400" y="44.200" width="10.100" height="7.600" fill="#808080" stroke="#000" stroke-width="1.300"/>
<path d="M8 48h7" stroke="#b4b4b4" stroke-width="1.400"/>
<!-- camera -->
<path d="M5.300 75.300L7.800 72.400H19V80.700L16.500 83.700Z" fill="#a0a0a0" stroke="#000" stroke-width="1.200" stroke-linejoin="round"/>
<rect x="5.300" y="75.300" width="11.300" height="8.400" fill="#d4d4d4" stroke="#000" stroke-width="1.300"/>
<path d="M9.200 72.400V71.400H12.600V72.400" fill="#fff" stroke="#000" stroke-width="1.200"/>
<circle cx="9.900" cy="79.700" r="2.500" fill="#fff" stroke="#000" stroke-width="1.300"/>
<rect x="13.600" y="76.700" width="2" height="1" fill="#fff"/>
<!-- rake -->
<g shape-rendering="crispEdges"><path d="M5 91h2v1h-2zM6 92h2v1h-2zM7 93h2v1h-2zM8 94h2v1h-2zM9 95h2v1h-2zM10 96h2v1h-2zM11 97h2v1h-2zM12 98h2v1h-2zM13 99h2v1h-2zM14 100h2v1h-2zM13 100h3v1h-3zM13 101h2v2h-2zM14 103h1v2h-1zM15 102h1v1h-1zM15 105h1v1h-1zM16 101h1v1h-1zM16 103h1v1h-1zM17 102h1v1h-1zM17 104h1v1h-1zM18 102h1v1h-1zM18 105h1v1h-1zM19 103h1v1h-1zM16 100h1v1h-1z" fill="#000"/><path d="M5 104h1v1h-1zM6 105h1v1h-1zM7 106h1v1h-1zM7 103h1v1h-1zM8 104h1v1h-1zM9 105h1v1h-1zM10 106h1v1h-1zM11 104h1v1h-1zM13 106h1v1h-1z" fill="#000"/><path d="M6 102h1v1h-1zM10 103h1v1h-1zM12 104h1v1h-1zM7 105h1v1h-1zM5 106h1v1h-1zM11 106h1v1h-1z" fill="#908000"/></g>
<!-- circular arrow -->
<path d="M17.600 125.800a6.400 6.400 0 1 0 0 7.800" fill="none" stroke="#0000e0" stroke-width="2"/>
<path d="M9 129.700h9" stroke="#0000e0" stroke-width="2"/>
<path d="M16 126.300l4.400 3.400-4.400 3.400z" fill="#0000e0"/>
<!-- floppy w/ wave -->
<g shape-rendering="crispEdges">
<path d="M6 145h2v1h12v2h1v12h-1v1h-14v-1h-1v-14h1z" fill="#0000ff"/>
<path d="M6 146h14v14h-14z" fill="#000098"/>
<rect x="8" y="146" width="11" height="6" fill="#101010"/>
<rect x="19" y="146" width="1" height="6" fill="#b0b0b0"/>
<path d="M7 146h2v8h-2zM9 151h1v1h-1zM10 150h1v1h-1zM11 151h1v1h-1zM12 150h1v1h-1zM13 149h1v1h-1zM14 151h1v1h-1zM15 150h1v1h-1zM16 148h1v3h-1zM17 147h1v5h-1zM18 150h1v1h-1z" fill="#ffff00"/>
<path d="M7 152.500h12M7 153.500h11" stroke="#ffff00"/>
<rect x="9" y="156" width="8" height="5" fill="#c8c8c8"/>
<rect x="11" y="157" width="2" height="3" fill="#000098"/>
</g>
</svg>
<div class="a" style="left:43px;top:346px;width:769px;height:22px;background:#000;"></div>
<div class="a" style="left:43px;top:368px;width:769px;height:2px;background:#f6f6f6;"></div>
<div class="a" style="left:43px;top:370px;width:769px;height:357px;background:#000;"></div>
<div class="a" style="left:44px;top:348px;width:15px;height:18px;box-sizing:border-box;background:#f0f0f0;border:1px solid;border-color:#fff #696969 #696969 #fff;"></div><div class="a" style="left:45px;top:349px;width:13px;height:16px;box-sizing:border-box;border:1px solid;border-color:#f0f0f0 #a0a0a0 #a0a0a0 #f0f0f0;"></div><div class="t" style="left:48.50px;top:350px;color:#1a1030;font-size:11px;letter-spacing:0.000px;">v</div>
<div class="t" style="left:128.20px;top:352px;color:#00f000;font-size:11px;letter-spacing:-0.396px;">Signal</div><div class="t" style="left:168.60px;top:352px;color:#00f000;font-size:11px;letter-spacing:-0.130px;">Reference</div><div class="t" style="left:236.80px;top:352px;color:#00f000;font-size:11px;letter-spacing:-0.060px;">Scr. Shot</div>
<svg width="851" height="733" viewBox="0 0 851 733" shape-rendering="crispEdges">
<g>
<path d="M112.5 650.9 L113.5 600.3 L114.5 574.3 L115.5 551.4 L116.5 530.8 L117.5 513.7 L118.5 500.8 L119.5 489.0 L120.5 482.7 L121.5 477.9 L122.5 473.3 L123.5 468.4 L124.5 462.0 L125.5 453.6 L126.5 445.0 L127.5 438.9 L128.5 436.4 L129.5 436.4 L130.5 437.7 L131.5 437.7 L132.5 433.9 L133.5 427.6 L134.5 421.3 L135.5 417.2 L136.5 417.1 L137.5 420.6 L138.5 425.4 L139.5 428.5 L140.5 427.4 L141.5 422.4 L142.5 415.8 L143.5 411.0 L144.5 410.5 L145.5 414.0 L146.5 419.5 L147.5 424.0 L148.5 425.1 L149.5 421.8 L150.5 416.3 L151.5 411.5 L152.5 410.2 L153.5 413.3 L154.5 419.1 L155.5 424.5 L156.5 426.8 L157.5 424.7 L158.5 419.4 L159.5 413.8 L160.5 411.1 L161.5 412.6 L162.5 417.8 L163.5 423.9 L164.5 427.1 L165.5 426.3 L166.5 421.9 L167.5 416.0 L168.5 412.1 L169.5 412.6 L170.5 416.8 L171.5 422.8 L172.5 427.2 L173.5 427.8 L174.5 424.1 L175.5 418.4 L176.5 413.7 L177.5 412.7 L178.5 415.8 L179.5 422.3 L180.5 427.9 L181.5 430.5 L182.5 428.6 L183.5 423.6 L184.5 418.7 L185.5 417.1 L186.5 419.6 L187.5 425.7 L188.5 432.0 L189.5 435.5 L190.5 434.9 L191.5 430.8 L192.5 425.7 L193.5 422.8 L194.5 424.0 L195.5 429.2 L196.5 435.8 L197.5 440.7 L198.5 441.6 L199.5 438.1 L200.5 433.0 L201.5 429.1 L202.5 428.7 L203.5 433.1 L204.5 439.6 L205.5 445.5 L206.5 447.6 L207.5 445.0 L208.5 440.1 L209.5 435.6 L210.5 434.2 L211.5 437.2 L212.5 443.5 L213.5 450.1 L214.5 453.2 L215.5 452.6 L216.5 448.1 L217.5 443.2 L218.5 441.0 L219.5 442.6 L220.5 448.1 L221.5 455.0 L222.5 459.3 L223.5 459.7 L224.5 456.3 L225.5 451.2 L226.5 447.6 L227.5 448.3 L228.5 453.1 L229.5 459.8 L230.5 464.6 L231.5 466.8 L232.5 464.0 L233.5 458.6 L234.5 454.2 L235.5 453.7 L236.5 457.0 L237.5 463.4 L238.5 469.6 L239.5 472.3 L240.5 470.9 L241.5 466.3 L242.5 461.5 L243.5 459.6 L244.5 461.8 L245.5 467.2 L246.5 473.6 L247.5 478.3 L248.5 477.7 L249.5 473.7 L250.5 468.2 L251.5 465.5 L252.5 466.1 L253.5 471.1 L254.5 477.6 L255.5 482.9 L256.5 484.2 L257.5 480.9 L258.5 475.9 L259.5 472.1 L260.5 471.4 L261.5 475.3 L262.5 481.9 L263.5 487.7 L264.5 490.7 L265.5 488.4 L266.5 484.1 L267.5 479.4 L268.5 477.2 L269.5 480.3 L270.5 486.2 L271.5 492.4 L272.5 496.5 L273.5 496.3 L274.5 492.6 L275.5 487.9 L276.5 484.9 L277.5 486.8 L278.5 492.6 L279.5 499.7 L280.5 503.6 L281.5 505.2 L282.5 501.4 L283.5 496.5 L284.5 492.1 L285.5 491.9 L286.5 496.3 L287.5 503.1 L288.5 508.3 L289.5 509.5 L290.5 508.0 L291.5 502.3 L292.5 497.8 L293.5 496.4 L294.5 499.2 L295.5 505.4 L296.5 511.6 L297.5 515.0 L298.5 514.0 L299.5 509.3 L300.5 503.9 L301.5 501.7 L302.5 503.8 L303.5 509.2 L304.5 515.4 L305.5 520.0 L306.5 520.2 L307.5 516.7 L308.5 511.5 L309.5 507.1 L310.5 507.5 L311.5 512.8 L312.5 519.5 L313.5 525.0 L314.5 525.0 L315.5 523.5 L316.5 517.1 L317.5 514.9 L318.5 513.9 L319.5 517.6 L320.5 524.0 L321.5 531.0 L322.5 533.2 L323.5 532.6 L324.5 527.9 L325.5 523.0 L326.5 521.2 L327.5 523.4 L328.5 528.6 L329.5 536.4 L330.5 540.6 L331.5 540.0 L332.5 536.8 L333.5 531.9 L334.5 527.4 L335.5 529.3 L336.5 534.2 L337.5 540.7 L338.5 546.8 L339.5 547.3 L340.5 544.7 L341.5 540.2 L342.5 536.3 L343.5 535.9 L344.5 541.3 L345.5 545.6 L346.5 552.1 L347.5 553.4 L348.5 553.0 L349.5 548.8 L350.5 544.1 L351.5 540.9 L352.5 543.9 L353.5 551.3 L354.5 556.5 L355.5 561.2 L356.5 558.8 L357.5 556.9 L358.5 551.5 L359.5 548.1 L360.5 548.3 L361.5 554.2 L362.5 561.1 L363.5 566.1 L364.5 566.4 L365.5 563.0 L366.5 558.3 L367.5 555.8 L368.5 552.2 L369.5 557.2 L370.5 563.5 L371.5 570.1 L372.5 571.0 L373.5 571.4 L374.5 565.9 L375.5 561.0 L376.5 559.3 L377.5 563.4 L378.5 569.6 L379.5 576.1 L380.5 578.3 L381.5 579.0 L382.5 572.0 L383.5 570.5 L384.5 562.5 L385.5 567.7 L386.5 572.4 L387.5 581.8 L388.5 583.2 L389.5 588.2 L390.5 579.8 L391.5 579.9 L392.5 574.2 L393.5 574.1 L394.5 579.5 L395.5 588.9 L396.5 592.4 L397.5 589.1 L398.5 592.0 L399.5 585.5 L400.5 578.2 L401.5 581.4 L402.5 581.7 L403.5 590.4 L404.5 596.6 L405.5 598.1 L406.5 599.0 L407.5 591.5 L408.5 588.9 L409.5 585.6 L410.5 588.6 L411.5 598.3 L412.5 601.4 L413.5 603.0 L414.5 604.5 L415.5 599.2 L416.5 595.6 L417.5 592.7 L418.5 593.3 L419.5 597.9 L420.5 602.9 L421.5 609.7 L422.5 612.0 L423.5 605.4 L424.5 601.5 L425.5 597.7 L426.5 599.9 L427.5 603.1 L428.5 605.0 L429.5 612.3 L430.5 610.9 L431.5 610.2 L432.5 607.8 L433.5 604.6 L434.5 603.7 L435.5 603.1 L436.5 606.1 L437.5 616.2 L438.5 618.1 L439.5 618.9 L440.5 614.2 L441.5 610.7 L442.5 607.8 L443.5 609.5 L444.5 610.7 L445.5 620.6 L446.5 620.7 L447.5 622.8 L448.5 624.6 L449.5 615.5 L450.5 607.4 L451.5 615.2 L452.5 617.5 L453.5 623.7 L454.5 625.8 L455.5 628.0 L456.5 623.9 L457.5 617.8 L458.5 620.9 L459.5 613.4 L460.5 615.6 L461.5 621.1 L462.5 634.4 L463.5 633.9 L464.5 628.5 L465.5 625.5 L466.5 623.0 L467.5 622.0 L468.5 614.4 L469.5 628.4 L470.5 629.8 L471.5 631.7 L472.5 632.8 L473.5 634.0 L474.5 633.2 L475.5 623.8 L476.5 625.7 L477.5 623.9 L478.5 634.6 L479.5 640.2 L480.5 631.7 L481.5 633.4 L482.5 634.7 L483.5 620.1 L484.5 625.3 L485.5 632.2 L486.5 627.0 L487.5 637.4 L488.5 641.5 L489.5 644.0 L490.5 630.3 L491.5 637.5 L492.5 632.1 L493.5 638.0 L494.5 642.1 L495.5 643.0 L496.5 646.6 L497.5 635.5 L498.5 634.3 L499.5 632.1 L500.5 633.3 L501.5 641.1 L502.5 630.8 L503.5 643.7 L504.5 642.2 L505.5 645.8 L506.5 657.9 L507.5 664.3 L508.5 653.9 L509.5 659.1 L510.5 657.0 L511.5 640.1 L512.5 670.4 L513.5 670.7 L514.5 649.9 L515.5 691.5 L516.5 653.5 L517.5 647.1 L518.5 664.1 L519.5 650.6 L520.5 663.5 L521.5 671.5 L522.5 661.0 L523.5 660.8 L524.5 686.1 L525.5 671.3 L526.5 670.2 L527.5 651.0 L528.5 670.5 L529.5 660.1 L530.5 684.4 L531.5 655.4 L532.5 659.0 L533.5 709.1 L534.5 668.4 L535.5 674.5 L536.5 655.5 L537.5 671.7 L538.5 644.4 L539.5 725.8 L540.5 687.9 L541.5 655.0 L542.5 663.1 L543.5 684.3 L544.5 719.2 L545.5 689.4 L546.5 711.3 L547.5 676.5 L548.5 707.8 L549.5 667.7 L550.5 661.3 L551.5 665.8 L552.5 667.0 L553.5 692.4 L554.5 688.1 L555.5 686.6 L556.5 705.4 L557.5 690.7 L558.5 695.4 L559.5 679.8 L560.5 648.3 L561.5 672.1 L562.5 685.1 L563.5 691.9 L564.5 671.3 L565.5 680.9 L566.5 683.3 L567.5 692.4 L568.5 695.4 L569.5 677.7 L570.5 678.5 L571.5 698.1 L572.5 674.5 L573.5 686.2 L574.5 692.0 L575.5 687.2 L576.5 668.4 L577.5 674.7 L578.5 720.2 L579.5 691.1 L580.5 700.3 L581.5 698.2 L582.5 710.5 L583.5 656.4 L584.5 691.5 L585.5 679.1 L586.5 727.0 L587.5 693.5 L588.5 689.8 L589.5 688.9 L590.5 686.8 L591.5 674.4 L592.5 727.0 L593.5 682.4 L594.5 668.5 L595.5 686.3 L596.5 689.5 L597.5 678.9 L598.5 665.2 L599.5 701.0 L600.5 693.8 L601.5 699.3 L602.5 696.0 L603.5 676.4 L604.5 694.8 L605.5 678.7 L606.5 727.0 L607.5 684.1 L608.5 698.9 L609.5 670.2 L610.5 687.5 L611.5 702.7 L612.5 710.9 L613.5 727.0 L614.5 695.6 L615.5 692.4 L616.5 711.1 L617.5 677.9 L618.5 727.0 L619.5 722.5 L620.5 702.7 L621.5 705.0 L622.5 675.2 L623.5 724.3 L624.5 689.2 L625.5 695.7 L626.5 679.3 L627.5 682.4 L628.5 712.1 L629.5 688.5 L630.5 707.2 L631.5 695.2 L632.5 727.0 L633.5 683.0 L634.5 692.6 L635.5 689.7 L636.5 716.8 L637.5 683.5 L638.5 706.4 L639.5 684.4 L640.5 691.1 L641.5 690.1 L642.5 687.2 L643.5 727.0 L644.5 724.0 L645.5 671.3 L646.5 677.2 L647.5 716.4 L648.5 717.1 L649.5 704.6 L650.5 694.0 L651.5 675.3 L652.5 679.7 L653.5 656.3 L654.5 671.5 L655.5 696.9 L656.5 721.8 L657.5 681.5 L658.5 691.7 L659.5 711.6 L660.5 693.1 L661.5 687.5 L662.5 699.8 L663.5 684.6 L664.5 692.5 L665.5 684.1 L666.5 685.3 L667.5 699.4 L668.5 684.1 L669.5 709.1 L670.5 703.7 L671.5 727.0 L672.5 707.1 L673.5 711.5 L674.5 716.6 L675.5 694.1 L676.5 690.7 L677.5 727.0 L678.5 683.6 L679.5 684.4 L680.5 681.1 L681.5 698.7 L682.5 697.4 L683.5 705.3 L684.5 689.1 L685.5 669.8 L686.5 696.8 L687.5 705.5 L688.5 693.3 L689.5 691.0 L690.5 699.9 L691.5 702.1 L692.5 693.1 L693.5 683.5 L694.5 693.3 L695.5 691.1 L696.5 669.9 L697.5 703.2 L698.5 683.2 L699.5 699.7 L700.5 695.7 L701.5 689.3 L702.5 707.5 L703.5 698.5 L704.5 716.8 L705.5 697.5 L706.5 704.6 L707.5 693.7 L708.5 681.0 L709.5 713.8 L710.5 720.2 L711.5 721.0" fill="none" stroke="#ffff00" stroke-width="1" stroke-linejoin="round"/>
<path d="M112.5 606.0 L113.5 560.0 L114.5 530.0 L115.5 512.9 L116.5 500.4 L117.5 491.3 L118.5 482.1 L119.5 473.0 L120.5 466.4 L121.5 459.9 L122.5 453.3 L123.5 447.7 L124.5 443.1 L125.5 438.4 L126.5 433.8 L127.5 429.5 L128.5 425.8 L129.5 421.9 L130.5 418.7 L131.5 415.9 L132.5 413.4 L133.5 411.5 L134.5 410.5 L135.5 409.6 L136.5 408.5 L137.5 407.4 L138.5 406.6 L139.5 405.7 L140.5 405.1 L141.5 404.2 L142.5 403.4 L143.5 402.9 L144.5 402.2 L145.5 401.9 L146.5 401.3 L147.5 400.9 L148.5 401.5 L149.5 402.3 L150.5 402.9 L151.5 403.1 L152.5 403.5 L153.5 403.7 L154.5 403.9 L155.5 403.9 L156.5 403.9 L157.5 404.0 L158.5 404.4 L159.5 404.7 L160.5 404.6 L161.5 404.6 L162.5 404.9 L163.5 404.8 L164.5 404.9 L165.5 405.0 L166.5 404.9 L167.5 404.8 L168.5 404.5 L169.5 404.6 L170.5 404.4 L171.5 404.4 L172.5 404.2 L173.5 404.0 L174.5 404.3 L175.5 404.6 L176.5 404.4 L177.5 404.4 L178.5 404.4 L179.5 405.1 L180.5 405.8 L181.5 406.3 L182.5 407.3 L183.5 407.6 L184.5 408.4 L185.5 409.5 L186.5 410.3 L187.5 410.9 L188.5 411.8 L189.5 412.7 L190.5 413.3 L191.5 413.7 L192.5 414.9 L193.5 415.6 L194.5 416.2 L195.5 416.7 L196.5 417.4 L197.5 417.9 L198.5 418.5 L199.5 419.3 L200.5 419.9 L201.5 420.3 L202.5 420.8 L203.5 421.4 L204.5 421.9 L205.5 422.4 L206.5 422.9 L207.5 423.6 L208.5 424.7 L209.5 425.0 L210.5 425.3 L211.5 425.8 L212.5 426.5 L213.5 427.6 L214.5 428.3 L215.5 428.7 L216.5 429.9 L217.5 430.4 L218.5 431.7 L219.5 432.1 L220.5 433.2 L221.5 433.4 L222.5 434.1 L223.5 435.0 L224.5 435.8 L225.5 436.4 L226.5 436.6 L227.5 437.7 L228.5 438.2 L229.5 438.7 L230.5 439.2 L231.5 440.3 L232.5 440.3 L233.5 440.8 L234.5 441.7 L235.5 442.1 L236.5 442.6 L237.5 443.4 L238.5 443.9 L239.5 444.4 L240.5 445.2 L241.5 445.5 L242.5 445.8 L243.5 446.5 L244.5 447.0 L245.5 447.7 L246.5 447.9 L247.5 448.2 L248.5 449.4 L249.5 449.5 L250.5 449.9 L251.5 451.2 L252.5 451.4 L253.5 452.4 L254.5 452.6 L255.5 453.0 L256.5 453.5 L257.5 454.4 L258.5 455.0 L259.5 455.4 L260.5 456.2 L261.5 456.4 L262.5 457.6 L263.5 457.5 L264.5 458.8 L265.5 459.8 L266.5 460.6 L267.5 461.5 L268.5 460.8 L269.5 462.4 L270.5 463.2 L271.5 463.7 L272.5 463.7 L273.5 465.1 L274.5 466.6 L275.5 465.9 L276.5 467.8 L277.5 470.4 L278.5 474.8 L279.5 473.4 L280.5 471.7 L281.5 472.8 L282.5 475.7 L283.5 474.7 L284.5 473.9 L285.5 474.9 L286.5 474.3 L287.5 475.2 L288.5 476.2 L289.5 476.4 L290.5 476.0 L291.5 477.8 L292.5 478.0 L293.5 479.2 L294.5 479.9 L295.5 481.2 L296.5 481.4 L297.5 481.0 L298.5 482.0 L299.5 484.1 L300.5 484.2 L301.5 485.8 L302.5 486.0 L303.5 486.1 L304.5 488.0 L305.5 487.5 L306.5 487.4 L307.5 490.9 L308.5 489.0 L309.5 491.4 L310.5 492.3 L311.5 492.5 L312.5 492.0 L313.5 494.5 L314.5 493.4 L315.5 494.1 L316.5 495.5 L317.5 497.0 L318.5 497.3 L319.5 498.3 L320.5 498.1 L321.5 498.9 L322.5 498.8 L323.5 500.1 L324.5 501.5 L325.5 501.4 L326.5 502.7 L327.5 502.6 L328.5 503.2 L329.5 504.4 L330.5 504.9 L331.5 507.0 L332.5 510.6 L333.5 510.0 L334.5 507.6 L335.5 508.3 L336.5 508.3 L337.5 509.9 L338.5 511.1 L339.5 510.6 L340.5 511.8 L341.5 513.2 L342.5 513.1 L343.5 513.3 L344.5 515.3 L345.5 515.8 L346.5 519.1 L347.5 518.5 L348.5 518.0 L349.5 517.2 L350.5 517.7 L351.5 519.1 L352.5 519.3 L353.5 518.2 L354.5 522.0 L355.5 521.3 L356.5 522.7 L357.5 521.3 L358.5 524.5 L359.5 523.2 L360.5 524.3 L361.5 523.5 L362.5 525.4 L363.5 526.0 L364.5 526.6 L365.5 527.9 L366.5 528.1 L367.5 529.8 L368.5 528.8 L369.5 531.9 L370.5 545.6 L371.5 537.3 L372.5 533.4 L373.5 533.6 L374.5 531.3 L375.5 534.4 L376.5 536.3 L377.5 535.3 L378.5 535.3 L379.5 537.0 L380.5 536.7 L381.5 538.8 L382.5 542.9 L383.5 562.1 L384.5 548.1 L385.5 539.9 L386.5 542.3 L387.5 543.4 L388.5 542.2 L389.5 543.1 L390.5 541.4 L391.5 547.4 L392.5 551.0 L393.5 545.8 L394.5 544.8 L395.5 547.5 L396.5 549.5 L397.5 549.1 L398.5 550.6 L399.5 549.1 L400.5 549.5 L401.5 553.2 L402.5 553.4 L403.5 553.3 L404.5 555.6 L405.5 557.8 L406.5 578.3 L407.5 565.2 L408.5 558.4 L409.5 557.8 L410.5 566.3 L411.5 559.0 L412.5 558.4 L413.5 558.3 L414.5 556.9 L415.5 560.2 L416.5 561.9 L417.5 563.8 L418.5 575.8 L419.5 569.5 L420.5 561.3 L421.5 563.2 L422.5 571.5 L423.5 566.1 L424.5 568.0 L425.5 567.0 L426.5 565.8 L427.5 566.9 L428.5 573.0 L429.5 568.8 L430.5 573.1 L431.5 572.1 L432.5 571.4 L433.5 571.2 L434.5 569.7 L435.5 569.8 L436.5 573.3 L437.5 572.7 L438.5 570.3 L439.5 577.1 L440.5 581.7 L441.5 576.4 L442.5 574.8 L443.5 576.2 L444.5 575.0 L445.5 574.2 L446.5 577.9 L447.5 575.0 L448.5 579.0 L449.5 576.0 L450.5 579.1 L451.5 579.5 L452.5 583.8 L453.5 579.9 L454.5 584.6 L455.5 582.8 L456.5 580.3 L457.5 582.0 L458.5 584.7 L459.5 586.0 L460.5 588.5 L461.5 584.0 L462.5 591.8 L463.5 591.0 L464.5 586.9 L465.5 582.9 L466.5 588.3 L467.5 588.8 L468.5 583.7 L469.5 592.7 L470.5 606.5 L471.5 593.6 L472.5 590.6 L473.5 593.2 L474.5 596.3 L475.5 592.9 L476.5 588.1 L477.5 587.9 L478.5 590.0 L479.5 591.2 L480.5 588.9 L481.5 585.4 L482.5 592.8 L483.5 588.0 L484.5 592.7 L485.5 598.7 L486.5 600.4 L487.5 593.5 L488.5 590.8 L489.5 598.0 L490.5 595.6 L491.5 597.5 L492.5 599.1 L493.5 597.1 L494.5 596.9 L495.5 595.7 L496.5 590.5 L497.5 595.0 L498.5 599.3 L499.5 601.4 L500.5 611.4 L501.5 603.8 L502.5 601.5 L503.5 603.7 L504.5 599.5 L505.5 603.1 L506.5 606.2 L507.5 608.7 L508.5 603.7 L509.5 605.4 L510.5 608.8 L511.5 607.9 L512.5 605.2 L513.5 608.3 L514.5 602.5 L515.5 611.4 L516.5 622.4 L517.5 608.8 L518.5 613.3 L519.5 607.9 L520.5 612.7 L521.5 610.0 L522.5 615.2 L523.5 616.9 L524.5 610.6 L525.5 608.8 L526.5 614.2 L527.5 620.4 L528.5 624.6 L529.5 617.9 L530.5 619.3 L531.5 607.6 L532.5 616.4 L533.5 614.3 L534.5 621.9 L535.5 618.5 L536.5 617.6 L537.5 621.7 L538.5 617.6 L539.5 626.6 L540.5 631.6 L541.5 627.9 L542.5 623.9 L543.5 632.5 L544.5 628.4 L545.5 632.3 L546.5 633.0 L547.5 627.6 L548.5 635.9 L549.5 636.2 L550.5 637.3 L551.5 637.3 L552.5 648.0 L553.5 648.2 L554.5 653.2 L555.5 637.6 L556.5 646.9 L557.5 643.4 L558.5 651.8 L559.5 651.4 L560.5 696.6 L561.5 639.4 L562.5 650.0 L563.5 649.1 L564.5 656.5 L565.5 653.9 L566.5 655.7 L567.5 661.4 L568.5 676.3 L569.5 644.0 L570.5 663.4 L571.5 671.2 L572.5 665.6 L573.5 667.2 L574.5 660.7 L575.5 675.3 L576.5 661.2 L577.5 679.6 L578.5 671.1 L579.5 662.7 L580.5 686.0 L581.5 666.7 L582.5 673.1 L583.5 668.1 L584.5 670.0 L585.5 665.1 L586.5 650.5 L587.5 667.4 L588.5 669.1 L589.5 625.2 L590.5 651.3 L591.5 642.9 L592.5 662.0 L593.5 658.9 L594.5 654.3 L595.5 659.7 L596.5 646.3 L597.5 645.4 L598.5 647.6 L599.5 653.7 L600.5 659.7 L601.5 659.5 L602.5 651.7 L603.5 668.0 L604.5 671.2 L605.5 656.0 L606.5 646.6 L607.5 671.6 L608.5 686.0 L609.5 679.3 L610.5 651.9 L611.5 669.7 L612.5 682.7 L613.5 646.7 L614.5 673.6 L615.5 665.2 L616.5 669.3 L617.5 675.4 L618.5 678.0 L619.5 674.1 L620.5 687.3 L621.5 673.8 L622.5 661.9 L623.5 651.3 L624.5 666.6 L625.5 649.9 L626.5 691.2 L627.5 667.6 L628.5 662.3 L629.5 654.9 L630.5 657.3 L631.5 665.4 L632.5 654.1 L633.5 705.3 L634.5 659.7 L635.5 659.0 L636.5 684.0 L637.5 684.4 L638.5 682.6 L639.5 663.9 L640.5 669.5 L641.5 667.9 L642.5 672.1 L643.5 668.5 L644.5 654.9 L645.5 649.9 L646.5 666.6 L647.5 674.2 L648.5 662.8 L649.5 665.3 L650.5 643.9 L651.5 659.4 L652.5 649.5 L653.5 698.2 L654.5 679.1 L655.5 658.3 L656.5 646.5 L657.5 673.6 L658.5 668.0 L659.5 677.3 L660.5 679.9 L661.5 669.5 L662.5 681.8 L663.5 682.2 L664.5 673.8 L665.5 689.5 L666.5 660.1 L667.5 689.0 L668.5 690.4 L669.5 651.4 L670.5 661.8 L671.5 708.2 L672.5 702.4 L673.5 668.7 L674.5 675.1 L675.5 660.3 L676.5 708.5 L677.5 681.7 L678.5 689.5 L679.5 686.7 L680.5 696.3 L681.5 693.4 L682.5 674.7 L683.5 688.4 L684.5 680.2 L685.5 677.5 L686.5 670.3 L687.5 672.8 L688.5 688.1 L689.5 696.0 L690.5 682.0 L691.5 671.6 L692.5 679.5 L693.5 675.1 L694.5 705.9 L695.5 687.7 L696.5 727.0 L697.5 689.5 L698.5 680.7 L699.5 698.8 L700.5 705.3 L701.5 708.2 L702.5 693.1 L703.5 699.1 L704.5 680.7 L705.5 695.7 L706.5 680.4 L707.5 692.0 L708.5 694.2 L709.5 713.0 L710.5 712.2 L711.5 684.2" fill="none" stroke="#00f8ff" stroke-width="1" stroke-linejoin="round"/>
</g>
<path d="M111.5 395V712" stroke="#b4b4b4" stroke-dasharray="6 3" stroke-dashoffset="2" stroke-width="1"/>
<path d="M211.5 395V712" stroke="#b4b4b4" stroke-dasharray="6 3" stroke-dashoffset="2" stroke-width="1"/>
<path d="M311.5 395V712" stroke="#b4b4b4" stroke-dasharray="6 3" stroke-dashoffset="2" stroke-width="1"/>
<path d="M411.5 395V712" stroke="#b4b4b4" stroke-dasharray="6 3" stroke-dashoffset="2" stroke-width="1"/>
<path d="M511.5 395V712" stroke="#b4b4b4" stroke-dasharray="6 3" stroke-dashoffset="2" stroke-width="1"/>
<path d="M611.5 395V712" stroke="#b4b4b4" stroke-dasharray="6 3" stroke-dashoffset="2" stroke-width="1"/>
<path d="M711.5 395V712" stroke="#b4b4b4" stroke-dasharray="6 3" stroke-dashoffset="2" stroke-width="1"/>
<path d="M43 390.5H812" stroke="#b4b4b4" stroke-dasharray="6 3" stroke-width="1"/>
<path d="M43 430.5H812" stroke="#b4b4b4" stroke-dasharray="6 3" stroke-width="1"/>
<path d="M43 470.5H812" stroke="#b4b4b4" stroke-dasharray="6 3" stroke-width="1"/>
<path d="M43 510.5H812" stroke="#b4b4b4" stroke-dasharray="6 3" stroke-width="1"/>
<path d="M43 550.5H812" stroke="#b4b4b4" stroke-dasharray="6 3" stroke-width="1"/>
<path d="M43 590.5H812" stroke="#b4b4b4" stroke-dasharray="6 3" stroke-width="1"/>
<path d="M43 630.5H812" stroke="#b4b4b4" stroke-dasharray="6 3" stroke-width="1"/>
<path d="M43 670.5H812" stroke="#b4b4b4" stroke-dasharray="6 3" stroke-width="1"/>
<path d="M43 710.5H812" stroke="#b4b4b4" stroke-dasharray="6 3" stroke-width="1"/>
</svg>
<div class="t" style="left:47.80px;top:378px;color:#c2c2c2;font-size:11px;letter-spacing:-0.468px;">- 30 dBm</div>
<div class="t" style="left:764.60px;top:378px;color:#c2c2c2;font-size:11px;letter-spacing:-0.468px;">- 30 dBm</div>
<div class="t" style="left:47.80px;top:418px;color:#c2c2c2;font-size:11px;letter-spacing:-0.468px;">- 40 dBm</div>
<div class="t" style="left:764.60px;top:418px;color:#c2c2c2;font-size:11px;letter-spacing:-0.468px;">- 40 dBm</div>
<div class="t" style="left:47.80px;top:458px;color:#c2c2c2;font-size:11px;letter-spacing:-0.468px;">- 50 dBm</div>
<div class="t" style="left:764.60px;top:458px;color:#c2c2c2;font-size:11px;letter-spacing:-0.468px;">- 50 dBm</div>
<div class="t" style="left:47.80px;top:498px;color:#c2c2c2;font-size:11px;letter-spacing:-0.468px;">- 60 dBm</div>
<div class="t" style="left:764.60px;top:498px;color:#c2c2c2;font-size:11px;letter-spacing:-0.468px;">- 60 dBm</div>
<div class="t" style="left:47.80px;top:538px;color:#c2c2c2;font-size:11px;letter-spacing:-0.468px;">- 70 dBm</div>
<div class="t" style="left:764.60px;top:538px;color:#c2c2c2;font-size:11px;letter-spacing:-0.468px;">- 70 dBm</div>
<div class="t" style="left:47.80px;top:578px;color:#c2c2c2;font-size:11px;letter-spacing:-0.468px;">- 80 dBm</div>
<div class="t" style="left:764.60px;top:578px;color:#c2c2c2;font-size:11px;letter-spacing:-0.468px;">- 80 dBm</div>
<div class="t" style="left:47.80px;top:618px;color:#c2c2c2;font-size:11px;letter-spacing:-0.468px;">- 90 dBm</div>
<div class="t" style="left:764.60px;top:618px;color:#c2c2c2;font-size:11px;letter-spacing:-0.468px;">- 90 dBm</div>
<div class="t" style="left:47.80px;top:658px;color:#c2c2c2;font-size:11px;letter-spacing:-0.417px;">- 100 dBm</div>
<div class="t" style="left:758.50px;top:658px;color:#c2c2c2;font-size:11px;letter-spacing:-0.417px;">- 100 dBm</div>
<div class="t" style="left:47.80px;top:698px;color:#c2c2c2;font-size:11px;letter-spacing:-0.326px;">- 110 dBm</div>
<div class="t" style="left:758.50px;top:698px;color:#c2c2c2;font-size:11px;letter-spacing:-0.326px;">- 110 dBm</div>
<div class="t" style="left:101.90px;top:376px;color:#c2c2c2;font-size:11px;letter-spacing:-0.456px;">0 Hz</div>
<div class="t" style="left:101.90px;top:713px;color:#c2c2c2;font-size:11px;letter-spacing:-0.456px;background:#000;padding:0 2px;margin-left:-2px;height:12px;">0 Hz</div>
<div class="t" style="left:199.55px;top:376px;color:#c2c2c2;font-size:11px;letter-spacing:-0.728px;">1 THz</div>
<div class="t" style="left:199.55px;top:713px;color:#c2c2c2;font-size:11px;letter-spacing:-0.728px;background:#000;padding:0 2px;margin-left:-2px;height:12px;">1 THz</div>
<div class="t" style="left:299.55px;top:376px;color:#c2c2c2;font-size:11px;letter-spacing:-0.728px;">2 THz</div>
<div class="t" style="left:299.55px;top:713px;color:#c2c2c2;font-size:11px;letter-spacing:-0.728px;background:#000;padding:0 2px;margin-left:-2px;height:12px;">2 THz</div>
<div class="t" style="left:399.55px;top:376px;color:#c2c2c2;font-size:11px;letter-spacing:-0.728px;">3 THz</div>
<div class="t" style="left:399.55px;top:713px;color:#c2c2c2;font-size:11px;letter-spacing:-0.728px;background:#000;padding:0 2px;margin-left:-2px;height:12px;">3 THz</div>
<div class="t" style="left:499.55px;top:376px;color:#c2c2c2;font-size:11px;letter-spacing:-0.728px;">4 THz</div>
<div class="t" style="left:499.55px;top:713px;color:#c2c2c2;font-size:11px;letter-spacing:-0.728px;background:#000;padding:0 2px;margin-left:-2px;height:12px;">4 THz</div>
<div class="t" style="left:599.55px;top:376px;color:#c2c2c2;font-size:11px;letter-spacing:-0.728px;">5 THz</div>
<div class="t" style="left:599.55px;top:713px;color:#c2c2c2;font-size:11px;letter-spacing:-0.728px;background:#000;padding:0 2px;margin-left:-2px;height:12px;">5 THz</div>
<div class="t" style="left:699.55px;top:376px;color:#c2c2c2;font-size:11px;letter-spacing:-0.728px;">6 THz</div>
<div class="t" style="left:699.55px;top:713px;color:#c2c2c2;font-size:11px;letter-spacing:-0.728px;background:#000;padding:0 2px;margin-left:-2px;height:12px;">6 THz</div>
<div class="t" style="left:142.00px;top:658px;color:#00a000;font-size:11px;letter-spacing:-0.025px;">Reference avr count 250</div>
<div class="t" style="left:142.00px;top:678px;color:#00a000;font-size:11px;letter-spacing:-0.115px;">Signal avr count 250</div>
<div class="a" style="left:839px;top:80px;width:1px;height:653px;background:#fff;"></div>
<div class="a" style="left:840px;top:80px;width:2px;height:653px;background:#a4a4a4;"></div>
<div class="a" style="left:842px;top:80px;width:2px;height:653px;background:#f4f4f4;"></div>
<div class="a" style="left:844px;top:80px;width:1px;height:653px;background:#858585;"></div>
<div class="a" style="left:845px;top:80px;width:1px;height:653px;background:#707070;"></div>
<div class="a" style="left:846px;top:80px;width:1px;height:653px;background:#a0a0a0;"></div>
<div class="a" style="left:845px;top:59px;width:1px;height:21px;background:#d8d8d8;"></div>
<div class="a" style="left:846px;top:59px;width:1px;height:21px;background:#b4b4b4;"></div>
<div class="a" style="left:11px;top:727px;width:829px;height:1px;background:#fff;"></div>
<div class="a" style="left:11px;top:728px;width:831px;height:2px;background:#a8a8a8;"></div>
<div class="a" style="left:5px;top:730px;width:839px;height:1px;background:#f4f4f4;"></div>
<div class="a" style="left:5px;top:731px;width:842px;height:2px;background:#bcbcbc;"></div>
<div class="a" style="left:13px;top:341px;width:829px;height:3px;background:#f5f5f5;"></div>
<div class="a" style="left:13px;top:344px;width:827px;height:1px;background:#fbfbfb;"></div>
</body></html>
